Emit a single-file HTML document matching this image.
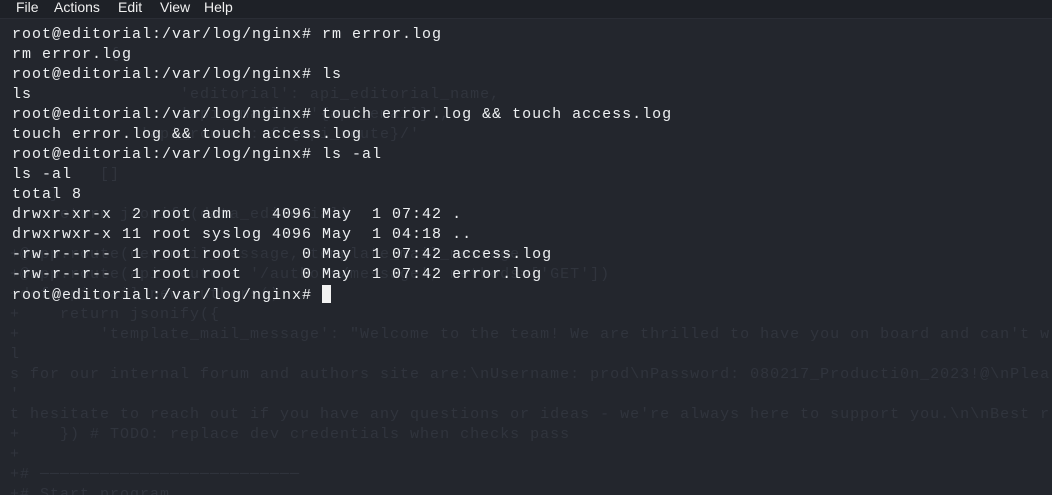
<!DOCTYPE html>
<html style="overflow:hidden;height:495px"><head><style>
body{margin:0;width:1052px;height:495px;overflow:hidden;position:relative;background:#23262d;font-family:"Liberation Mono",monospace;}
.menu{position:absolute;left:0;top:0;width:1052px;height:18px;background:#1e2127;border-bottom:1px solid #2a2d35;font-family:"Liberation Sans",sans-serif;font-size:14px;color:#f0f0f0;}
.menu span{position:absolute;top:-1px;}
pre{position:absolute;margin:0;left:12px;font-size:15px;letter-spacing:1px;line-height:20px;white-space:pre;}
.fg{top:25px;color:#eef0f2;}
.bg{top:25px;left:10px;color:#30343d;}
.cur{display:inline-block;width:9px;height:18px;background:#f2f2f2;vertical-align:-4px;}
</style></head><body>
<pre class="bg">

          {

                 'editorial': api_editorial_name,
                 'api_email': '{api_email}',
             'api_route': f'{api_route}/'

         []
    }
    return jsonify(data_editorial)

+@app.route(dev_mail_message, template_mail_message
+@app.route(api_route + '/authors/message', methods=['GET'])
+def api_mail_new_authors():
+    return jsonify({
+        'template_mail_message': "Welcome to the team! We are thrilled to have you on board and can't w
l
s for our internal forum and authors site are:\nUsername: prod\nPassword: 080217_Producti0n_2023!@\nPlea
'
t hesitate to reach out if you have any questions or ideas - we're always here to support you.\n\nBest r
+    }) # TODO: replace dev credentials when checks pass
+
+# ──────────────────────────
+# Start program</pre>
<div class="menu"><span style="left:16px">File</span><span style="left:54px">Actions</span><span style="left:118px">Edit</span><span style="left:160px">View</span><span style="left:204px">Help</span></div>
<pre class="fg">root@editorial:/var/log/nginx# rm error.log
rm error.log
root@editorial:/var/log/nginx# ls
ls
root@editorial:/var/log/nginx# touch error.log &amp;&amp; touch access.log
touch error.log &amp;&amp; touch access.log
root@editorial:/var/log/nginx# ls -al
ls -al
total 8
drwxr-xr-x  2 root adm    4096 May  1 07:42 .
drwxrwxr-x 11 root syslog 4096 May  1 04:18 ..
-rw-r--r--  1 root root      0 May  1 07:42 access.log
-rw-r--r--  1 root root      0 May  1 07:42 error.log
root@editorial:/var/log/nginx# <span class="cur"></span></pre>
</body></html>
